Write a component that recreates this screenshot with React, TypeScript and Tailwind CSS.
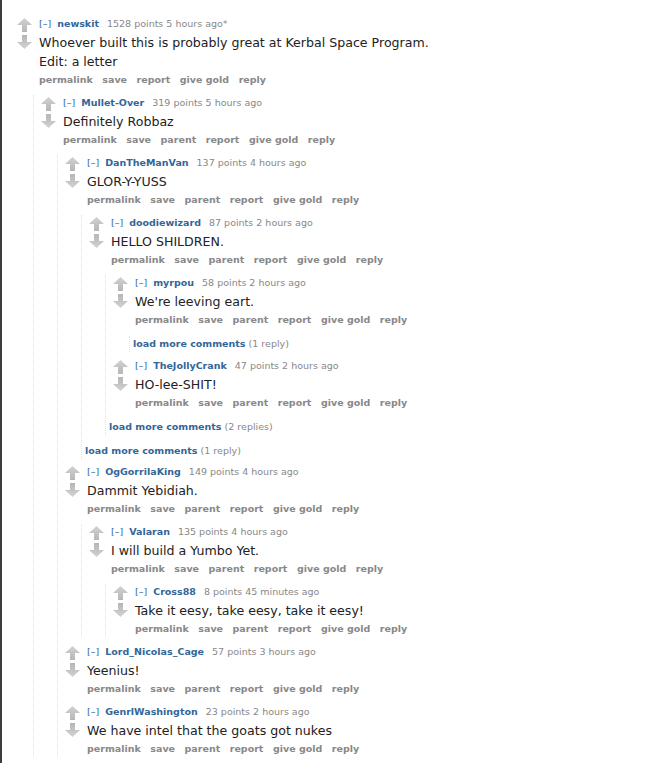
import React from 'react';

// ─────────────────────────────────────────────
// Types & data
// ─────────────────────────────────────────────

interface CommentData {
    user: string;
    points: number;
    time: string;
    edited?: boolean;
    body: string[];
    children?: Node[];
    gap?: 'tight' | 'tighter'; // comes right after a "load more" row
}

type Node = CommentData | { loadMore: string };

const THREAD: CommentData = {
    user: 'newskit',
    points: 1528,
    time: '5 hours ago',
    edited: true,
    body: ['Whoever built this is probably great at Kerbal Space Program.', 'Edit: a letter'],
    children: [
        {
            user: 'Mullet-Over',
            points: 319,
            time: '5 hours ago',
            body: ['Definitely Robbaz'],
            children: [
                {
                    user: 'DanTheManVan',
                    points: 137,
                    time: '4 hours ago',
                    body: ['GLOR-Y-YUSS'],
                    children: [
                        {
                            user: 'doodiewizard',
                            points: 87,
                            time: '2 hours ago',
                            body: ['HELLO SHILDREN.'],
                            children: [
                                {
                                    user: 'myrpou',
                                    points: 58,
                                    time: '2 hours ago',
                                    body: ["We're leeving eart."],
                                    children: [{ loadMore: '1 reply' }],
                                },
                                {
                                    user: 'TheJollyCrank',
                                    points: 47,
                                    time: '2 hours ago',
                                    body: ['HO-lee-SHIT!'],
                                    gap: 'tight',
                                },
                                { loadMore: '2 replies' },
                            ],
                        },
                        { loadMore: '1 reply' },
                    ],
                },
                {
                    user: 'OgGorrilaKing',
                    points: 149,
                    time: '4 hours ago',
                    body: ['Dammit Yebidiah.'],
                    gap: 'tighter',
                    children: [
                        {
                            user: 'Valaran',
                            points: 135,
                            time: '4 hours ago',
                            body: ['I will build a Yumbo Yet.'],
                            children: [
                                {
                                    user: 'Cross88',
                                    points: 8,
                                    time: '45 minutes ago',
                                    body: ['Take it eesy, take eesy, take it eesy!'],
                                },
                            ],
                        },
                    ],
                },
                {
                    user: 'Lord_Nicolas_Cage',
                    points: 57,
                    time: '3 hours ago',
                    body: ['Yeenius!'],
                },
                {
                    user: 'GenrlWashington',
                    points: 23,
                    time: '2 hours ago',
                    body: ['We have intel that the goats got nukes'],
                },
            ],
        },
    ],
};

// ─────────────────────────────────────────────
// Vote arrows
// ─────────────────────────────────────────────

function Arrow({ down = false }: { down?: boolean }) {
    return (
        <svg width="15" height="14" viewBox="0 0 15 14" className={down ? 'rotate-180' : ''}>
            <defs>
                <linearGradient id={down ? 'ad' : 'au'} x1="0" y1="0" x2="0" y2="1">
                    <stop offset="0" stopColor="#d2d2d2" />
                    <stop offset="1" stopColor="#b6b6b6" />
                </linearGradient>
            </defs>
            <path d="M7.5 0 L15 7 L10 7 L10 14 L5 14 L5 7 L0 7 Z" fill={`url(#${down ? 'ad' : 'au'})`} />
        </svg>
    );
}

// ─────────────────────────────────────────────
// Pieces
// ─────────────────────────────────────────────

function LoadMore({ label }: { label: string }) {
    return (
        <div className="mt-[8px] pl-[3px] h-[16px] leading-[16px] text-[9.5px] whitespace-nowrap">
            <span className="font-bold text-[#369]">load more comments</span>{' '}
            <span className="text-[#888]">({label})</span>
        </div>
    );
}

function Children({ nodes }: { nodes: Node[] }) {
    return (
        <div className="ml-[23px] border-l border-dotted border-[#ddf]">
            {nodes.map((n, i) =>
                'loadMore' in n ? (
                    <LoadMore key={i} label={n.loadMore} />
                ) : (
                    <Comment key={i} c={n} isTop={false} />
                )
            )}
        </div>
    );
}

function Comment({ c, isTop }: { c: CommentData; isTop: boolean }) {
    const buttons = isTop
        ? ['permalink', 'save', 'report', 'give gold', 'reply']
        : ['permalink', 'save', 'parent', 'report', 'give gold', 'reply'];

    const mt = c.gap === 'tighter' ? 'mt-[5px]' : c.gap === 'tight' ? 'mt-[6px]' : 'mt-[7px]';

    return (
        <div className={mt}>
            <div className="flex">
                <div className="w-[29px] shrink-0 pl-[7px] pt-[2px] flex flex-col gap-[3px]">
                    <Arrow />
                    <Arrow down />
                </div>
                <div>
                    <div className="h-[16px] leading-[16px] text-[9.5px] whitespace-nowrap">
                        <span className="text-[#369]">[–]</span>
                        <span className="ml-[6px] font-bold text-[#369]">{c.user}</span>
                        <span className="ml-[8px] text-[#888]">
                            {c.points} points {c.time}
                            {c.edited ? '*' : ''}
                        </span>
                    </div>
                    <div className="pt-[1px]">
                        {c.body.map((line, i) => (
                            <p key={i} className="text-[12.6px] leading-[19px] text-[#222] whitespace-nowrap">
                                {line}
                            </p>
                        ))}
                    </div>
                    <div className="mt-[1px] h-[16px] leading-[16px] flex gap-[9.5px] text-[9.5px] font-bold text-[#888] whitespace-nowrap">
                        {buttons.map(b => (
                            <span key={b}>{b}</span>
                        ))}
                    </div>
                </div>
            </div>
            {c.children && <Children nodes={c.children} />}
        </div>
    );
}

// ─────────────────────────────────────────────
// Page
// ─────────────────────────────────────────────

export default function App() {
    return (
        <div
            className="h-[763px] overflow-hidden bg-white border-l-2 border-[#3c3c3c] pl-[8px] pt-[9px]"
            style={{ fontFamily: '"DejaVu Sans", Verdana, sans-serif' }}
        >
            <Comment c={THREAD} isTop />
        </div>
    );
}
